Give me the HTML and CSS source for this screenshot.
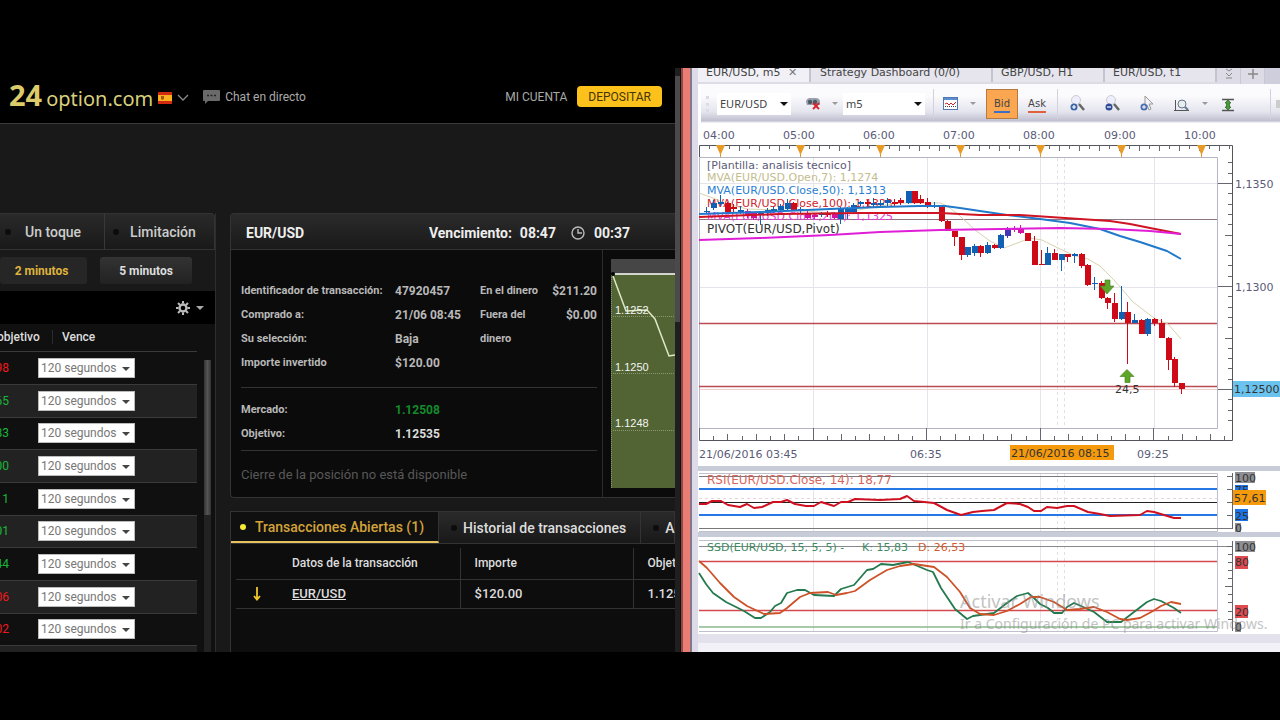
FILE: index.html
```html
<!DOCTYPE html>
<html lang="es">
<head>
<meta charset="utf-8">
<title>24option.com - EUR/USD</title>
<link rel="stylesheet" href="styles.css">
</head>
<body>
<main class="desk">
  <section class="broker">
    <div class="broker-page">
      <header class="site-head">
        <a class="logo" href="#"><span class="logo-num">24</span><span class="logo-word">option.com</span></a>
        <button class="lang" type="button" aria-label="Idioma">
          <svg width="14" height="12" viewBox="0 0 14 12"><rect width="14" height="12" fill="#d22a12"/><rect y="3" width="14" height="6" fill="#f9b21d"/><path d="M3 4h3v3l-1.500 1-1.500-1z" fill="#a4541c"/></svg>
          <svg width="12" height="8" viewBox="0 0 12 8"><path d="M1 1l5 5 5-5" fill="none" stroke="#8a8a8a" stroke-width="1.300"/></svg>
        </button>
        <a class="chat" href="#">
          <svg width="18" height="14" viewBox="0 0 18 14"><path d="M1 0h15q1 0 1 1v9q0 1-1 1H5l-3 3v-3H1q-1 0-1-1V1q0-1 1-1z" fill="#6a6a6a"/><path d="M4 5.500h2M7.500 5.500h2M11 5.500h2" stroke="#222" stroke-width="1.500"/></svg>
          Chat en directo</a>
        <a class="account" href="#">MI CUENTA</a>
        <button class="deposit" type="button">DEPOSITAR</button>
      </header>
      <div class="work">
        <section class="assets">
          <nav class="tabs asset-tabs">
            <button class="tab" type="button"><i class="dot"></i>Un toque</button>
            <button class="tab" type="button"><i class="dot"></i>Limitación</button>
          </nav>
          <div class="spans">
            <button class="span on" type="button">2 minutos</button>
            <button class="span" type="button">5 minutos</button>
          </div>
          <div class="tools">
            <button class="gear" type="button" aria-label="Configuración">
              <svg width="14" height="14" viewBox="0 0 14 14"><circle cx="7" cy="7" r="3.500" fill="none" stroke="#bbb" stroke-width="2.400"/><path d="M7 0v2.500M7 11.500V14M0 7h2.500M11.500 7H14M2 2l2 2M10 10l2 2M12 2l-2 2M4 10l-2 2" stroke="#bbb" stroke-width="2"/></svg>
              <svg width="8" height="4" viewBox="0 0 8 4"><path d="M0 0h8L4 4z" fill="#aaa"/></svg>
            </button>
          </div>
          <div class="list">
            <table class="quotes">
              <thead><tr><th>objetivo</th><th><span class="th-sep">Vence</span></th></tr></thead>
              <tbody>
                <tr><td class="down">98</td><td><label class="pick"><select aria-label="Vence"><option>120 segundos</option></select></label></td></tr>
                <tr><td class="up">65</td><td><label class="pick"><select aria-label="Vence"><option>120 segundos</option></select></label></td></tr>
                <tr><td class="up">83</td><td><label class="pick"><select aria-label="Vence"><option>120 segundos</option></select></label></td></tr>
                <tr><td class="up">00</td><td><label class="pick"><select aria-label="Vence"><option>120 segundos</option></select></label></td></tr>
                <tr><td class="up">1</td><td><label class="pick"><select aria-label="Vence"><option>120 segundos</option></select></label></td></tr>
                <tr><td class="up">01</td><td><label class="pick"><select aria-label="Vence"><option>120 segundos</option></select></label></td></tr>
                <tr><td class="up">44</td><td><label class="pick"><select aria-label="Vence"><option>120 segundos</option></select></label></td></tr>
                <tr><td class="down">06</td><td><label class="pick"><select aria-label="Vence"><option>120 segundos</option></select></label></td></tr>
                <tr><td class="down">02</td><td><label class="pick"><select aria-label="Vence"><option>120 segundos</option></select></label></td></tr>
                <tr><td></td><td><label class="pick"><select aria-label="Vence"><option>120 segundos</option></select></label></td></tr>
              </tbody>
            </table>
            <div class="list-bar"><i class="list-thumb"></i></div>
          </div>
        </section>
        <div class="trade-col">
          <section class="trade">
            <header class="trade-head">
              <h2>EUR/USD</h2>
              <span class="exp">Vencimiento:</span><span class="exp-time">08:47</span>
              <svg width="14" height="14" viewBox="0 0 14 14"><circle cx="7" cy="7" r="6" fill="none" stroke="#bbb" stroke-width="1.400"/><path d="M7 3v4h4" fill="none" stroke="#bbb" stroke-width="1.400"/></svg>
              <span>00:37</span>
            </header>
            <div class="trade-body">
              <div class="details">
                <div class="pairs">
                  <dl class="facts">
                    <dt>Identificador de transacción:</dt><dd>47920457</dd>
                    <dt>Comprado a:</dt><dd>21/06 08:45</dd>
                    <dt>Su selección:</dt><dd>Baja</dd>
                    <dt>Importe invertido</dt><dd>$120.00</dd>
                  </dl>
                  <dl class="payout">
                    <dt>En el dinero</dt><dd>$211.20</dd>
                    <dt>Fuera del dinero</dt><dd>$0.00</dd>
                  </dl>
                </div>
                <dl class="facts prices">
                  <dt>Mercado:</dt><dd class="rise">1.12508</dd>
                  <dt>Objetivo:</dt><dd class="strong">1.12535</dd>
                </dl>
                <p class="closing">Cierre de la posición no está disponible</p>
              </div>
              <div class="spark">
                <svg width="64" height="229" viewBox="611 259 64 229">
                  <rect x="611" y="259" width="64" height="229" fill="#526433"/>
                  <rect x="611" y="259" width="64" height="15" fill="#464646"/>
                  <path d="M611.500 275V488" stroke="#8a9775" stroke-dasharray="1 1"/>
                  <path d="M613 316.500h62M613 373.500h62M613 430.500h62" stroke="#8c9a72" stroke-dasharray="1 1"/>
                  <path d="M612 274h63" stroke="#fff" stroke-width="1.500"/>
                  <path d="M613 276l13 35 21-1 8 9 14 37 6-1" fill="none" stroke="#dfe8c8" stroke-width="1.500"/>
                  <circle cx="613" cy="274" r="2" fill="#000"/>
                  <g class="spark-txt"><text x="615" y="314">1.1252</text><text x="615" y="371">1.1250</text><text x="615" y="427">1.1248</text></g>
                </svg>
              </div>
            </div>
          </section>
          <section class="deals">
            <nav class="tabs deal-tabs">
              <button class="tab on" type="button"><i class="dot"></i>Transacciones Abiertas (1)</button>
              <button class="tab" type="button"><i class="dot"></i>Historial de transacciones</button>
              <button class="tab" type="button"><i class="dot"></i>Alertas</button>
            </nav>
            <table class="deal-table">
              <thead><tr><th>Datos de la transacción</th><th>Importe</th><th>Objetivo</th></tr></thead>
              <tbody><tr>
                <td><span class="deal-name"><svg width="8" height="14" viewBox="0 0 8 14"><path d="M4 0v12M1 9l3 3.500L7 9" fill="none" stroke="#f1c72c" stroke-width="1.800"/></svg><a href="#">EUR/USD</a></span></td>
                <td>$120.00</td><td>1.12535</td></tr></tbody>
            </table>
          </section>
        </div>
      </div>
    </div>
    <div class="page-bar"><i class="page-thumb"></i></div>
  </section>

  <section class="station">
    <nav class="st-tabs">
      <button class="st-tab on" type="button">EUR/USD, m5 <span class="x">✕</span></button>
      <button class="st-tab wide" type="button">Strategy Dashboard (0/0)</button>
      <button class="st-tab mid" type="button">GBP/USD, H1</button>
      <button class="st-tab mid" type="button">EUR/USD, t1</button>
      <button class="st-btn" type="button" aria-label="Lista"><svg width="10" height="14" viewBox="0 0 10 14"><path d="M2 1l3 2 3-2M2 5l3 3 3-3M2 10h6" fill="none" stroke="#888"/></svg></button>
      <button class="st-btn" type="button" aria-label="Nueva"><svg width="10" height="14" viewBox="0 0 10 14"><path d="M0 6h10M5 1v10" stroke="#888" stroke-width="1.500"/></svg></button>
      <span class="st-win"></span>
    </nav>
    <div class="bar">
      <i class="grip"></i>
      <label class="combo"><select aria-label="Instrumento"><option>EUR/USD</option></select></label>
      <button class="ic link" type="button" aria-label="Enlazar"><svg width="15" height="13" viewBox="0 0 15 13"><path d="M0 5q0-3 3-4h7q3 0 4 3v4H1z" fill="#9aa1ab"/><circle cx="4" cy="5" r="2.200" fill="#4c5a68"/><circle cx="9" cy="5" r="2.200" fill="#4c5a68"/><path d="M7 6l6 6M13 6l-6 6" stroke="#d8232a" stroke-width="1.800"/></svg></button>
      <i class="caret"></i>
      <label class="combo period"><select aria-label="Periodo"><option>m5</option></select></label>
      <i class="sep"></i>
      <button class="ic" type="button" aria-label="Gráfico"><svg width="15" height="13" viewBox="0 0 15 13"><rect x=".5" y=".5" width="14" height="12" fill="#fff" stroke="#4f78b4"/><rect x="1" y="1" width="13" height="2" fill="#5b8fd0"/><path d="M2 7l2-1 2 2 2-2 2 2 3-3" fill="none" stroke="#c22"/><path d="M2 9.500h11" stroke="#444" stroke-dasharray="1 1"/></svg></button>
      <i class="caret"></i>
      <button class="side bid" type="button">Bid</button>
      <button class="side ask" type="button">Ask</button>
      <i class="sep far"></i>
      <button class="ic zoom" type="button" aria-label="Acercar"><svg width="17" height="18" viewBox="0 0 17 18"><circle cx="7" cy="5" r="4.500" fill="#eef" stroke="#ccc"/><path d="M10 9l5 6" stroke="#666" stroke-width="2.500"/><circle cx="5" cy="12" r="3.500" fill="#3b63a8"/><path d="M3 12h4M5 10v4" stroke="#fff" stroke-width="1.200"/></svg></button>
      <button class="ic zoom" type="button" aria-label="Alejar"><svg width="17" height="18" viewBox="0 0 17 18"><circle cx="7" cy="5" r="4.500" fill="#eef" stroke="#ccc"/><path d="M10 9l5 6" stroke="#666" stroke-width="2.500"/><circle cx="5" cy="12" r="3.500" fill="#2d4c95"/><path d="M3 12h4" stroke="#fff" stroke-width="1.200"/></svg></button>
      <button class="ic zoom" type="button" aria-label="Puntero"><svg width="17" height="18" viewBox="0 0 17 18"><path d="M6 1l8 8-4 0 2 5-2 1-2-5-2 2z" fill="#f2f2f8" stroke="#999"/><circle cx="5" cy="12" r="3.500" fill="#4a6fae"/><path d="M3 12h4M5 10v4" stroke="#fff"/></svg></button>
      <button class="ic zoom" type="button" aria-label="Rango"><svg width="16" height="18" viewBox="0 0 16 18"><path d="M1.500 5v11M0 15.500h15" stroke="#555" fill="none"/><circle cx="8" cy="9" r="4" fill="#e6eef0" stroke="#678"/><path d="M11 12l3 3" stroke="#678" stroke-width="2"/></svg></button>
      <i class="caret"></i>
      <button class="ic zoom" type="button" aria-label="Ajustar"><svg width="14" height="18" viewBox="0 0 14 18"><path d="M1 4.500h12M1 15.500h12" stroke="#555" stroke-width="1.300"/><path d="M7 5l3 3H8.500v4H10l-3 3-3-3h1.500V8H4z" fill="#4b9a3a" stroke="#2f6a28" stroke-width=".800"/></svg></button>
      <i class="sep end"></i>
      <i class="stub"></i>
    </div>
    <div class="charts">
      <svg class="plot" viewBox="698 124 582 342" id="price"></svg>
      <svg class="plot" viewBox="698 471 582 61" id="rsi"></svg>
      <svg class="plot" viewBox="698 537 582 97" id="ssd"></svg>
    </div>
    <div class="foot"></div>
  </section>
</main>
<script src="charts.js"></script>
</body>
</html>
```

FILE: styles.css
```css
* { box-sizing: border-box; }
body {
  margin: 0;
  height: 100vh;
  padding: 68px 0;
  background: #000;
  font-family: Roboto, "Liberation Sans", sans-serif;
  font-size: 12px;
  color: #ddd;
}
button { font: inherit; color: inherit; border: 0; background: none; padding: 0; white-space: nowrap; }
select { font: inherit; color: inherit; border: 0; appearance: none; }
a { color: inherit; text-decoration: none; }
h2, p, dl, dd { margin: 0; }
svg { flex: none; }

.desk { height: 100%; display: grid; grid-template-columns: 17fr 15fr; overflow: hidden; }

/* broker site */
.broker { min-width: 0; min-height: 0; display: flex; background: #191919; overflow: hidden; }
.broker-page { flex: 1; min-width: 0; display: flex; flex-direction: column; overflow: hidden; }
.page-bar { width: 5px; background: #1f1f1f; padding-top: 8px; }
.page-thumb { display: block; height: 246px; background: #4a4a4a; }

.site-head {
  flex: none;
  height: 56px;
  padding: 2px 13px 0 9px;
  display: flex;
  align-items: center;
  background: #000;
  border-bottom: 1px solid #3a3a3a;
}
.logo { display: flex; align-items: baseline; color: #dccb6a; }
.logo-num { font: 700 29px/30px "Noto Sans", sans-serif; margin-right: 4px; }
.logo-word { font: 400 20px/30px "Noto Sans", sans-serif; color: #d8cf7c; }
.lang { display: flex; align-items: center; gap: 5px; margin: 2px 14px 0 5px; }
.chat { display: flex; align-items: center; gap: 4px; font-size: 12px; color: #aaa; }
.account { margin-left: auto; margin-right: 10px; font-size: 12px; color: #aaa; }
.deposit {
  height: 21px;
  padding: 0 11px;
  border-radius: 4px;
  background: #fcc21b;
  color: #43340a;
}

.work { flex: 1; min-height: 0; padding-top: 89px; display: grid; grid-template-columns: 216px minmax(0, 1fr); gap: 14px; }

.tabs { display: flex; background: linear-gradient(#2a2a2a, #191919); border: 1px solid #333; border-left: 0; }
.tab { display: flex; align-items: center; font-size: 14px; font-weight: 500; color: #ccc; }
.dot { flex: none; width: 6px; height: 6px; border-radius: 50%; background: #0c0c0c; }

.assets { min-height: 0; display: flex; flex-direction: column; background: #101010; border-right: 1px solid #2e2e2e; overflow: hidden; }
.asset-tabs { flex: none; height: 37px; border-radius: 0 4px 0 0; }
.asset-tabs .tab { padding: 0 23px 0 13px; gap: 14px; margin-left: -8px; }
.asset-tabs .tab + .tab { border-left: 1px solid #383838; margin-left: 0; padding-left: 8px; gap: 11px; }
.spans { flex: none; height: 41px; padding-top: 7px; display: flex; align-items: flex-start; gap: 13px; background: #191919; overflow: hidden; }
.span { width: 92px; height: 27px; border-radius: 3px; background: linear-gradient(#333, #222); font-size: 12px; font-weight: 700; color: #ddd; }
.span.on { width: 87px; padding-right: 4px; background: #262626; color: #dfb33c; }
.tools { flex: none; height: 33px; background: #000; display: flex; justify-content: flex-end; padding-right: 11px; }
.gear { display: flex; align-items: center; gap: 6px; }

.list { flex: 1; min-height: 0; display: flex; overflow: hidden; }
.quotes { width: 237px; flex: none; align-self: flex-start; margin-left: -40px; table-layout: fixed; border-collapse: collapse; }
.quotes th { height: 27px; padding: 0; font-size: 12px; font-weight: 500; text-align: left; white-space: nowrap; color: #ddd; }
.quotes th:first-child { width: 78px; padding-left: 37px; }
.th-sep { display: inline-block; margin-left: 14px; padding-left: 9px; border-left: 1px solid #2c2c2c; }
.quotes tbody tr { height: 33px; border-top: 1px solid #3a3a3a; background: #101010; }
.quotes tbody tr:nth-child(3n) { height: 32px; }
.quotes tbody tr:nth-child(even) { background: #222; }
.quotes td { padding: 0; }
.quotes td:first-child { text-align: right; padding-right: 29px; }
.down { color: #f0181c; }
.up { color: #18b73a; }
.pick { display: block; position: relative; width: 97px; }
.pick::after, .combo::after {
  content: "";
  position: absolute;
  right: 5px;
  top: 9px;
  border: 4px solid transparent;
  border-top-color: #444;
  pointer-events: none;
}
.pick select { display: block; width: 100%; height: 20px; padding: 0 0 0 2px; background: #fff; color: #777; font-size: 12px; border: 1px solid #bbb; }
.list-bar { width: 7px; margin: 36px 0 0 7px; background: #222; }
.list-thumb { display: block; height: 155px; background: linear-gradient(90deg, #333, #555, #333); }

.trade-col { min-width: 0; min-height: 0; display: flex; flex-direction: column; gap: 13px; }
.trade { flex: none; background: #0b0b0b; border: 1px solid #333; border-right: 0; border-radius: 4px 0 0 4px; }
.trade-head {
  height: 36px;
  padding: 2px 45px 0 15px;
  display: flex;
  align-items: center;
  background: linear-gradient(#2b2b2b, #191919);
  border-bottom: 1px solid #333;
  font-size: 14px;
  font-weight: 700;
  color: #eee;
}
.trade-head h2 { font-size: 14px; flex: 1; }
.exp-time { margin: 0 15px 0 8px; }
.trade-head svg { margin-right: 9px; }
.trade-body { display: flex; }
.details { flex: 1; min-width: 0; height: 247px; padding: 29px 5px 0 10px; border-right: 1px solid #2c2c2c; }
.pairs { display: flex; justify-content: space-between; padding-bottom: 12px; border-bottom: 1px solid #333; }
.facts, .payout { display: grid; grid-template-columns: 154px 80px; line-height: 24px; font-weight: 700; color: #b8b8b8; align-content: start; }
.payout { grid-template-columns: 62px 55px; }
.payout dd { text-align: right; }
.facts dd, .payout dd { font-size: 12px; }
.facts dt, .payout dt { font-size: 11px; }
.facts dt { white-space: nowrap; }
.prices { padding: 10px 0 4px; border-bottom: 1px solid #333; }
.facts .rise { color: #148a2c; }
.facts .strong { color: #ddd; }
.closing { padding-top: 15px; font-size: 13px; line-height: 18px; color: #585858; }
.spark { flex: none; width: 72px; padding: 9px 0 0 8px; }
.spark svg { display: block; }
.spark-txt { font: 11px "Liberation Sans", sans-serif; fill: #f4f4f4; }

.deals { flex: 1; min-height: 0; background: #0d0d0d; border-left: 1px solid #333; overflow: hidden; }
.deal-tabs { height: 33px; }
.deal-tabs .tab { padding: 0 14px 0 12px; gap: 6px; border-right: 1px solid #333; color: #ddd; }
.deal-tabs .tab.on { padding-left: 9px; gap: 9px; background: #101010; color: #d3a339; border-bottom: 2px solid #e5c25f; }
.deal-tabs .tab.on .dot { background: #f6ea33; }
.deal-table { width: 460px; margin: 4px 0 0 5px; table-layout: fixed; border-collapse: collapse; }
.deal-table th { height: 31px; padding: 0 14px; text-align: left; font-size: 12px; font-weight: 500; white-space: nowrap; }
.deal-table th:first-child { width: 224px; padding-left: 56px; }
.deal-table th:nth-child(2) { width: 173px; }
.deal-table td { height: 29px; padding: 0 14px; font-size: 13px; font-weight: 500; }
.deal-table td:first-child { padding-left: 17px; }
.deal-table tr { border-bottom: 1px solid #333; }
.deal-table th + th, .deal-table td + td { border-left: 1px solid #333; }
.deal-name { display: flex; align-items: center; gap: 31px; }
.deal-name a { text-decoration: underline; }

/* charting station */
.station {
  min-width: 0;
  display: flex;
  flex-direction: column;
  background: #fff;
  border-left: 1px solid #1a0d10;
  box-shadow: inset 2px 0 #8c4a48, inset 9px 0 #e97d74, inset 11px 0 #85788a, inset 17px 0 #dedbe9;
  padding-left: 17px;
  overflow: hidden;
  font-family: "DejaVu Sans", sans-serif;
  color: #444;
}
.st-tabs { flex: none; height: 16px; display: flex; overflow: hidden; background: #dddce6; }
.st-tab { flex: none; height: 20px; margin-top: -6px; padding: 0 9px 0 8px; font-size: 11px; border-right: 2px solid #c4c3d0; text-align: left; background: #e6e5ee; }
.st-tab.on { background: #f1f0f6; width: 113px; }
.st-tab.wide { width: 182px; padding-left: 9px; }
.st-tab.mid { width: 112px; }
.st-btn { flex: none; width: 24px; border-right: 1px solid #c8c7d4; }
.st-win { flex: 1; background: #cfcedd; }
.x { font-size: 11px; margin-left: 4px; color: #777; }
.bar {
  flex: none;
  height: 40px;
  margin-left: 3px;
  padding-bottom: 1px;
  display: flex;
  align-items: center;
  background: linear-gradient(#fbfbfd 30%, #e4e4ee 70%, #bfbfd0 92%, #fff 98%);
}
.bar > * { flex: none; }
.grip { width: 5px; height: 16px; margin: 0 6px 0 5px; border-left: 3px dotted #dcdce6; }
.combo { position: relative; width: 74px; margin-right: 14px; font-family: "Noto Sans", sans-serif; }
.combo::after { right: 3px; border-top-color: #111; }
.combo select { display: block; width: 100%; height: 22px; padding: 0 0 0 3px; background: #fff; font-size: 11px; }
.combo.period { width: 82px; margin-right: 8px; }
.ic { display: flex; align-items: center; justify-content: center; width: 16px; }
.caret { border: 3px solid transparent; border-top-color: #999; margin: 3px 5px 0 12px; }
.link + .caret { margin-left: 11px; }
.sep { width: 1px; height: 30px; background: #d2d2de; margin-right: 8px; }
.sep.far { margin-right: 11px; }
.side { width: 32px; height: 30px; font-family: "DejaVu Sans", sans-serif; font-size: 10px; text-decoration: underline 2px #e0603c; text-underline-offset: 4px; }
.bid { background: #fba650; border: 1px solid #b47a40; text-decoration-color: #3f6fc4; margin-left: 5px; }
.ask { margin: 0 4px 0 3px; }
.zoom { margin-right: 19px; }
.zoom + .caret { margin-left: -7px; margin-right: 12px; }
.caret + .zoom { margin-right: 34px; }
.end { margin-right: 5px; }
.stub { width: 6px; height: 8px; background: #ccc; }

.charts { display: flex; flex-direction: column; gap: 5px; background: #c8ccd8; }
.plot { display: block; width: 100%; height: auto; background: #fff; }
.foot { flex: 1; background: linear-gradient(#e2e1ec 50%, #f2f1f7 50%); }
.plot text { font: 11px "DejaVu Sans", sans-serif; fill: #5b5b78; }
.plot text.lg { font-size: 12px; }
.plot .dark { fill: #333; }
.plot .tan { fill: #c3bd8e; }
.plot .blue { fill: #2a80d2; }
.plot .red { fill: #d2242c; }
.plot .coral { fill: #d9655a; }
.plot .green { fill: #3d8a63; }
.plot .orange { fill: #d4572c; }
.plot .pink { fill: #e838d8; }
.plot .mark { font: 18px "Noto Sans", sans-serif; fill: #888; opacity: .5; }
.plot .mark.small { font-size: 14px; }
```

FILE: charts.js
```js
const line = (d, stroke, w = 1, extra = "") =>
  `<path d="${d}" fill="none" stroke="${stroke}" stroke-width="${w}" ${extra}/>`;
const text = (x, y, s, cls = "") => `<text x="${x}" y="${y}" class="${cls}">${s}</text>`;
const box = (x, y, w, h, fill) => `<rect x="${x}" y="${y}" width="${w}" height="${h}" fill="${fill}"/>`;
const poly = (pts, stroke, w) =>
  `<polyline points="${pts}" fill="none" stroke="${stroke}" stroke-width="${w}" stroke-linejoin="round"/>`;

const BLUE = "#1260b4", RED = "#cf0a18", PINK = "#d3129e";
const gridX = [813.5, 927.5, 1040.5, 1154.5];

function columns(top, bottom) {
  return gridX.map(x => line(`M${x} ${top}V${bottom}`, "#e4e4ea")).join("") +
    [1057.5, 1064.5].map(x => line(`M${x} ${top}V${bottom}`, "#e6dfe2", 1, 'stroke-dasharray="3 3"')).join("");
}

// x, body top, body bottom, high, low, colour
const candles = [
  [706,211,212,207,214,BLUE],[713,203,208,200,210,BLUE],[720,202,204,195,206,BLUE],[727,203,212,202,213,RED],[733,207,209,204,213,RED],
  [740,210,212,206,214,BLUE],[747,211,216,209,218,PINK],[753,213,218,212,220,PINK],[760,213,215,211,225,BLUE],[767,210,213,208,216,BLUE],
  [773,209,211,207,213,BLUE],[780,206,210,204,212,BLUE],[787,203,209,199,210,BLUE],[793,203,210,202,211,RED],[800,209,211,207,213,BLUE],
  [807,213,218,210,219,PINK],[814,215,217,213,219,PINK],[821,213,215,212,217,BLUE],[827,213,215,211,217,RED],[834,213,218,212,219,PINK],
  [840,208,219,207,224,BLUE],[847,208,212,207,219,BLUE],[853,205,212,203,213,BLUE],[860,202,204,201,206,BLUE],[867,202,204,200,206,RED],
  [873,203,205,198,207,BLUE],[880,203,205,200,207,BLUE],[887,200,203,198,207,BLUE],[894,202,204,199,206,RED],[900,200,203,198,205,RED],
  [908,191,203,191,204,BLUE],[914,191,203,191,204,RED],[920,199,203,195,204,RED],[927,202,207,198,208,RED],[934,205,207,202,208,BLUE],
  [941,207,221,206,222,RED],[947,221,231,220,231,RED],[954,231,237,231,246,RED],[961,237,255,237,260,RED],[967,247,255,247,257,BLUE],
  [974,246,253,244,256,BLUE],[980,246,253,245,257,RED],[987,245,253,242,254,BLUE],[994,245,248,244,249,RED],[1000,235,248,234,249,BLUE],
  [1007,229,236,227,238,"#4434b8"],[1014,229,230,226,232,PINK],[1020,229,233,225,234,PINK],[1027,233,241,233,241,RED],[1034,241,265,236,265,RED],
  [1041,264,265,250,265,RED],[1047,253,265,247,265,BLUE],[1054,253,260,249,260,RED],[1061,254,260,254,271,BLUE],[1067,254,257,254,262,RED],
  [1074,254,256,253,263,BLUE],[1081,254,266,253,268,RED],[1087,265,285,264,286,RED],[1094,283,284,277,290,BLUE],[1101,283,298,281,299,RED],
  [1107,298,303,297,309,RED],[1114,303,319,293,322,RED],[1121,312,319,286,320,BLUE],[1127,312,323,302,364,RED],[1134,320,323,314,323,BLUE],
  [1141,320,334,319,334,RED],[1147,319,334,318,336,BLUE],[1154,319,323,318,326,RED],[1161,323,338,319,338,RED],[1168,338,360,337,370,RED],
  [1174,359,383,357,387,RED],[1181,383,389,383,394,RED]
];

function drawPrice() {
  let s = columns(158, 428);
  s += line("M699 183.500H1217M699 287.500H1217", "#e4e4ea");
  s += line("M699 389.500H1217", "#efcdd0");
  s += line("M699.500 157.500H1217.500V428.500H699.500z", "#b4b4c4");
  s += line("M699 219.500H1217", "#8c7480") + line("M699 323.500H1217M699 386.500H1217", "#bc4a52", 1.5);
  s += line("M699.500 157V145.500H1232.500V440.500H699.500V428", "#55555c");
  for (let i = 1, x = 709.5; x < 1230; x += 10, i++) s += line(`M${x} 145v${i % 2 ? 4 : 6}`, "#66666e");
  for (let i = 0; i < 38; i++) {
    const x = Math.round(699 + i * 14.2) + 0.5;
    s += line(`M${x} 440v${i % 8 === 0 ? -12 : i % 2 ? -4 : -6}`, "#66666e");
  }
  for (let i = -2; i < 24; i++) {
    const y = Math.round(183 + i * 10.3) + 0.5;
    s += line(`M1232 ${y}h${i % 10 === 0 ? -14 : i % 5 === 0 ? -7 : -4}`, "#66666e");
  }
  [720, 800, 880, 960, 1040, 1121, 1201].forEach((x, i) => {
    const h = i + 4;
    s += `<path d="M${x - 4} 145h9l-4 9v3h-1v-3z" fill="#e79a26"/>`;
    s += text(x - 17, 139, (h < 10 ? "0" : "") + h + ":00");
  });
  s += text(707, 169, "[Plantilla: analisis tecnico]") + text(707, 181, "MVA(EUR/USD.Open,7): 1,1274", "tan") +
    text(707, 194, "MVA(EUR/USD.Close,50): 1,1313", "blue") + text(707, 207, "MVA(EUR/USD.Close,100): 1,1323", "red") +
    text(707, 220, "MVA(EUR/USD.Close,200): 1,1325", "pink") + text(707, 233, "PIVOT(EUR/USD,Pivot)", "dark lg");
  s += poly("699,193 713,198 727,204 747,209 780,210 807,211 840,214 873,207 900,203 941,203 950,208 960,216 975,230 990,241 1004,248 1020,242 1030,238 1042,240 1056,247 1075,256 1088,259 1100,266 1114,280 1133,302 1154,318 1168,324 1181,339", "#d6d2b0", 1);
  candles.forEach(([x, t, b, hi, lo, c]) => {
    s += line(`M${x + 0.5} ${hi}V${lo}`, c, 1) + box(x - 2, t, 6, b - t, c);
  });
  s += poly("699,214 760,212 830,209 880,207 920,206 945,206 960,208 980,211 1007,215 1040,219 1070,223 1100,229 1120,236 1140,242 1167,251 1181,259", "#2179cc", 2);
  s += poly("699,217 780,214 860,213 940,213 980,215 1020,215 1050,217 1080,219 1110,221 1130,224 1150,228 1181,234", "#cf1424", 2);
  s += poly("699,240 760,238 830,235 880,232 940,230 1000,229 1060,228 1110,229 1150,231 1181,234", "#e01ed8", 2);
  s += '<path d="M1105 280h5v6h4l-7 8-7-8h5z" fill="#5fa52a" stroke="#3d7a1a" stroke-width=".6"/>';
  s += '<path d="M1125 382.500h5v-6h4l-7-7-7 7h5z" fill="#5fa52a" stroke="#3d7a1a" stroke-width=".6"/>';
  s += text(1115, 393, "24,5", "dark");
  s += text(1235, 188, "1,1350") + text(1235, 291, "1,1300") + box(1233, 381, 47, 16, "#6ac3ee") + text(1234, 393, "1,12500", "dark");
  s += text(699, 458, "21/06/2016 03:45") + text(910, 458, "06:35") + box(1010, 445, 104, 15, "#f59a0c") +
    text(1011, 457, "21/06/2016 08:15", "dark") + text(1137, 458, "09:25");
  document.getElementById("price").innerHTML = s;
}

function drawRsi() {
  let s = columns(473, 531) + line("M699 473.500H1217.500V531.500H699", "#c0c0cc");
  s += line("M699 476.500H1217M699 528.500H1232", "#77777c") + line("M699 489H1217M699 515H1217", "#2478e6", 2);
  s += line("M699 498.500H1217", "#e8d5d8", 1, 'stroke-dasharray="3 3"') + line("M699 502.500H1217", "#222");
  s += line("M1232.500 473V529M1232 476.500h-5M1232 489.500h-5M1232 502.500h-5M1232 515.500h-5", "#66666e");
  s += text(707, 484, "RSI(EUR/USD.Close, 14): 18,77", "coral lg");
  s += poly("699,504 706,504 712,501 721,501 728,505 740,507 747,504 754,508 762,507 773,502 781,502 787,500 795,504 806,506 814,506 821,502 834,506 841,502 848,502 855,499 880,500 900,499 907,496 914,501 934,503 947,510 961,515 973,512 982,511 994,510 1007,503 1020,504 1028,507 1034,511 1041,511 1047,507 1057,508 1067,506 1074,506 1088,512 1100,514 1110,516 1140,515 1147,511 1154,512 1174,518 1181,518", "#cf1020", 2);
  s += box(1235, 472, 20, 11, "#8e8e92") + text(1235, 482, "100", "dark") + box(1235, 485, 13, 12, "#1c74e4") + text(1235, 494, "75", "dark") +
    box(1235, 509, 13, 12, "#1c74e4") + text(1235, 520, "25", "dark") + box(1235, 523, 6, 9, "#8e8e92") + text(1235, 532, "0", "dark") +
    box(1233, 490, 33, 15, "#f59a0c") + text(1234, 502, "57,61", "dark");
  document.getElementById("rsi").innerHTML = s;
}

function drawSsd() {
  let s = columns(540, 631) + line("M699 540.500H1217.500V631.500H699", "#c0c0cc");
  s += line("M699 546.500H1232", "#88888c") + line("M699 561.500H1217M699 610.500H1217", "#d4484e", 1.5) + line("M699 627H1217", "#8ab88c", 1.5);
  s += line("M1232.500 541V631M1232 546.500h-5M1232 554.500h-4M1232 562.500h-4M1232 570.500h-4M1232 578.500h-4M1232 586.500h-7M1232 594.500h-4M1232 602.500h-4M1232 611.500h-4M1232 619.500h-4", "#66666e");
  s += text(707, 551, "SSD(EUR/USD, 15, 5, 5) -", "green") + text(862, 551, "K: 15,83", "green") + text(918, 551, "D: 26,53", "orange");
  s += poly("699,573 706,584 713,593 726,602 744,611 755,618 761,618 770,612 775,606 781,603 787,593 797,590 805,590 814,595 834,596 841,589 854,585 867,570 873,569 881,564 893,565 908,562 927,570 933,572 941,588 955,609 967,619 973,616 980,615 994,613 1007,603 1017,596 1028,593 1034,598 1040,604 1048,608 1054,613 1062,613 1067,607 1074,603 1081,606 1094,612 1107,622 1121,622 1134,612 1147,602 1154,599 1161,601 1174,608 1181,613", "#24794e", 1.8);
  s += poly("699,561 707,568 720,583 734,597 747,606 764,614 780,613 787,608 800,597 810,593 828,592 836,595 847,593 855,591 870,580 887,570 900,566 914,564 934,567 947,577 960,592 970,608 980,614 994,615 1007,611 1020,604 1031,597 1040,597 1054,602 1067,610 1080,609 1094,607 1107,612 1120,619 1127,620 1140,618 1153,611 1161,606 1171,602 1181,604", "#cd5228", 1.8);
  s += box(1235, 541, 20, 11, "#8e8e92") + text(1235, 551, "100", "dark") + box(1235, 556, 13, 13, "#dd4a50") + text(1235, 566, "80", "dark") +
    box(1235, 605, 13, 13, "#dd4a50") + text(1235, 616, "20", "dark") + box(1235, 622, 6, 10, "#8e8e92") + text(1235, 631, "0", "dark");
  s += text(960, 608, "Activar Windows", "mark") + text(960, 629, "Ir a Configuración de PC para activar Windows.", "mark small");
  document.getElementById("ssd").innerHTML = s;
}

drawPrice();
drawRsi();
drawSsd();
```
